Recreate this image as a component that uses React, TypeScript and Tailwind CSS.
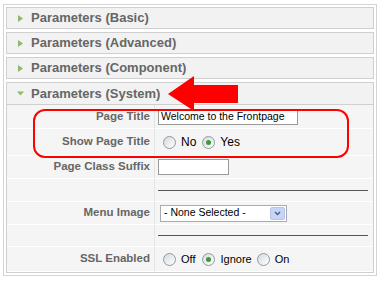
import type { ReactNode } from "react";

function Radio({ checked }: { checked?: boolean }) {
  return (
    <span className="relative inline-flex h-[13px] w-[13px] shrink-0 items-center justify-center rounded-full border border-[#8d9aa6] bg-gradient-to-br from-[#d6d9dc] to-white">
      {checked && <span className="h-[5px] w-[5px] rounded-full bg-[#3c9a3c]" />}
    </span>
  );
}

function Header({ title }: { title: string }) {
  return (
    <div className="flex h-[22px] items-center border border-[#cfcfcf] bg-[#f2f2f2] pl-[9px]">
      <svg width="9" height="9" viewBox="0 0 9 9" className="mr-[6px]">
        <polygon points="2,1 7,4.5 2,8" fill="#8cba6a" />
      </svg>
      <span className="text-[13px] font-bold text-[#666]">{title}</span>
    </div>
  );
}

function Row({ label, h, children }: { label?: string; h: string; children?: ReactNode }) {
  return (
    <div className={`flex border-b border-white ${h}`}>
      <div className="flex w-[148px] items-center justify-end border-r border-[#e4e4e4] pr-[4px] text-[11.5px] font-bold text-[#666]">
        {label}
      </div>
      <div className="flex flex-1 items-center pl-[3px]">{children}</div>
    </div>
  );
}

function Hr() {
  return <div className="mr-[5px] h-px flex-1 bg-[#555]" />;
}

export default function App() {
  return (
    <div className="relative h-[283px] w-[383px] bg-white font-['Liberation_Sans',Arial,sans-serif]">
      <div className="ml-[3px] pt-[4px]">
        <div className="flex h-[272px] w-[374px] flex-col gap-[3px] border border-[#d4d4d4] p-[2px]">
          <Header title="Parameters (Basic)" />
          <Header title="Parameters (Advanced)" />
          <Header title="Parameters (Component)" />
          <div className="flex flex-1 flex-col border border-[#cfcfcf]">
            <div className="flex h-[22px] shrink-0 items-center border-b border-[#cfcfcf] bg-[#f2f2f2] pl-[9px]">
              <svg width="9" height="9" viewBox="0 0 9 9" className="mr-[6px]">
                <polygon points="1,2.5 8,2.5 4.5,6.5" fill="#8cba6a" />
              </svg>
              <span className="text-[13px] font-bold text-[#666]">Parameters (System)</span>
            </div>
            <div className="flex-1 bg-[#f5f5f5]">
              <Row label="Page Title" h="h-[24px]">
                <div className="flex h-[16px] w-[140px] items-center border border-[#9a9a9a] bg-white pl-[2px] text-[10.5px] text-black">
                  Welcome to the Frontpage
                </div>
              </Row>
              <Row label="Show Page Title" h="h-[27px]">
                <div className="flex items-center pl-[5px] text-[12px] text-black">
                  <Radio />
                  <span className="ml-[5px] mr-[6px]">No</span>
                  <Radio checked />
                  <span className="ml-[5px]">Yes</span>
                </div>
              </Row>
              <Row label="Page Class Suffix" h="h-[23px]">
                <div className="h-[16px] w-[71px] border border-[#9a9a9a] bg-white" />
              </Row>
              <Row h="h-[23px]">
                <Hr />
              </Row>
              <Row label="Menu Image" h="h-[23px]">
                <div className="ml-[2px] flex h-[17px] w-[127px] items-center border border-[#a5acb5] bg-white pl-[3px] text-[10.5px] text-black">
                  <span className="flex-1">- None Selected -</span>
                  <span className="mr-px flex h-[13px] w-[15px] items-center justify-center rounded-[2px] border border-[#b7c6e6] bg-[#c6d4f5]">
                    <svg width="7" height="5" viewBox="0 0 7 5">
                      <polyline points="1,1 3.5,3.5 6,1" fill="none" stroke="#4d6185" strokeWidth="1.5" />
                    </svg>
                  </span>
                </div>
              </Row>
              <Row h="h-[22px]">
                <Hr />
              </Row>
              <Row label="SSL Enabled" h="h-[25px]">
                <div className="flex items-center pl-[5px] text-[11px] text-black">
                  <Radio />
                  <span className="ml-[5px] mr-[7px]">Off</span>
                  <Radio checked />
                  <span className="ml-[5px] mr-[5px]">Ignore</span>
                  <Radio />
                  <span className="ml-[5px]">On</span>
                </div>
              </Row>
            </div>
          </div>
        </div>
      </div>
      <svg className="pointer-events-none absolute left-0 top-0" width="383" height="283" viewBox="0 0 383 283">
        <rect x="34" y="110" width="314" height="47" rx="11" fill="none" stroke="#f00" strokeWidth="2" />
        <polygon points="168,94 194,76 194,85 238,85 238,103 194,103 194,111" fill="#f00" />
      </svg>
    </div>
  );
}
